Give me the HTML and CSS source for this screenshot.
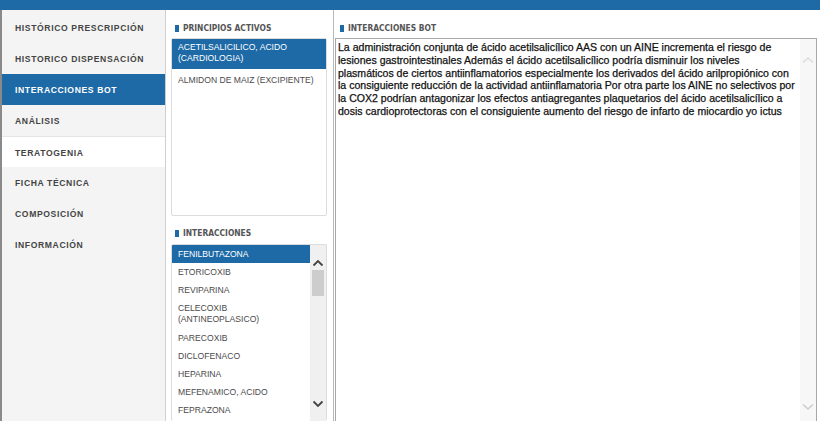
FILE: index.html
```html
<!DOCTYPE html>
<html lang="es">
<head>
<meta charset="utf-8">
<link rel="stylesheet" href="styles.css">
</head>
<body>
<div class="topbar"></div>
<div class="main">
  <nav class="sidebar">
    <div class="nav-item">HISTÓRICO PRESCRIPCIÓN</div>
    <div class="nav-item">HISTORICO DISPENSACIÓN</div>
    <div class="nav-item active">INTERACCIONES BOT</div>
    <div class="nav-item">ANÁLISIS</div>
    <div class="nav-item hover">TERATOGENIA</div>
    <div class="nav-item">FICHA TÉCNICA</div>
    <div class="nav-item">COMPOSICIÓN</div>
    <div class="nav-item">INFORMACIÓN</div>
  </nav>
  <section class="middle">
    <h2 class="heading">PRINCIPIOS ACTIVOS</h2>
    <div class="listbox principles">
      <div class="row sel">ACETILSALICILICO, ACIDO (CARDIOLOGIA)</div>
      <div class="row">ALMIDON DE MAIZ (EXCIPIENTE)</div>
    </div>
    <h2 class="heading second">INTERACCIONES</h2>
    <div class="listbox interactions">
      <div class="items">
        <div class="irow sel">FENILBUTAZONA</div>
        <div class="irow">ETORICOXIB</div>
        <div class="irow">REVIPARINA</div>
        <div class="irow">CELECOXIB (ANTINEOPLASICO)</div>
        <div class="irow">PARECOXIB</div>
        <div class="irow">DICLOFENACO</div>
        <div class="irow">HEPARINA</div>
        <div class="irow">MEFENAMICO, ACIDO</div>
        <div class="irow">FEPRAZONA</div>
      </div>
      <div class="vscroll">
        <svg class="arrow" width="12" height="8" viewBox="0 0 12 8"><path d="M1.5 6.5 L6 2 L10.5 6.5" fill="none" stroke="#444" stroke-width="1.8"/></svg>
        <div class="thumb"></div>
        <div class="track"></div>
        <svg class="arrow" width="12" height="8" viewBox="0 0 12 8"><path d="M1.5 1.5 L6 6 L10.5 1.5" fill="none" stroke="#444" stroke-width="1.8"/></svg>
      </div>
    </div>
  </section>
  <section class="right">
    <h2 class="heading">INTERACCIONES BOT</h2>
    <div class="textbox">
      <p class="text">La administración conjunta de ácido acetilsalicílico AAS con un AINE incrementa el riesgo de lesiones gastrointestinales Además el ácido acetilsalicílico podría disminuir los niveles plasmáticos de ciertos antiinflamatorios especialmente los derivados del ácido arilpropiónico con la consiguiente reducción de la actividad antiinflamatoria Por otra parte los AINE no selectivos por la COX2 podrían antagonizar los efectos antiagregantes plaquetarios del ácido acetilsalicílico a dosis cardioprotectoras con el consiguiente aumento del riesgo de infarto de miocardio yo ictus</p>
      <div class="tscroll">
        <svg width="14" height="8" viewBox="0 0 14 8"><path d="M2 6.5 L7 2 L12 6.5" fill="none" stroke="#ddd" stroke-width="1.6"/></svg>
        <svg width="14" height="8" viewBox="0 0 14 8"><path d="M2 1.5 L7 6 L12 1.5" fill="none" stroke="#ccc" stroke-width="1.6"/></svg>
      </div>
    </div>
  </section>
</div>
</body>
</html>
```
FILE: styles.css
```css
* { box-sizing: border-box; margin: 0; padding: 0; }
html, body { width: 820px; height: 421px; overflow: hidden; background: #fff; }
body { font-family: "Liberation Sans", Arial, sans-serif; color: #333; }

.topbar { height: 10px; background: #1d6aa6; }

.main { display: flex; height: 411px; border-left: 2px solid #8a8a8a; }

.sidebar {
  width: 164px;
  flex: none;
  background: #f4f4f4;
  border-right: 1px solid #cfcfcf;
  padding-top: 2px;
}
.nav-item {
  height: 31px;
  display: flex;
  align-items: center;
  padding-left: 13px;
  padding-top: 1px;
  font-size: 8.6px;
  font-weight: bold;
  letter-spacing: 0.62px;
  color: #444;
}
.nav-item.active { background: #1d6aa6; color: #fff; }
.nav-item.hover { background: #fff; border-top: 1px solid #e6e6e6; }

.middle {
  width: 168px;
  flex: none;
  padding: 0 6px 0 5px;
  border-right: 1px solid #b8b8b8;
  display: flex;
  flex-direction: column;
}
.heading {
  display: flex;
  align-items: flex-end;
  height: 28px;
  padding-left: 4px;
  padding-bottom: 5px;
  font-family: "Liberation Sans Narrow", "DejaVu Sans Condensed", sans-serif;
  font-size: 8.4px;
  font-weight: bold;
  color: #555;
  line-height: 9px;
}
.heading::before {
  content: "";
  width: 4px;
  height: 7px;
  background: #1d6aa6;
  margin-right: 4px;
  margin-bottom: 1px;
}
.heading.second { height: 27px; margin-top: 1px; padding-bottom: 6px; }

.listbox {
  border: 1px solid #dcdcdc;
  border-radius: 2px;
  background: #fff;
}
.principles { height: 178px; }
.row {
  padding: 3px 6px 4px 6px;
  font-size: 8.6px;
  line-height: 11px;
  color: #4a4a4a;
}
.row.sel { background: #1d6aa6; color: #fff; padding: 3px 6px 5px 6px; }
.principles .row + .row { padding-top: 6px; }

.interactions { flex: 1; display: flex; overflow: hidden; border-bottom: none; }
.items { flex: 1; }
.irow {
  padding: 3.8px 6px 3.4px 6px;
  font-size: 8.6px;
  line-height: 11px;
  color: #4a4a4a;
}
.irow.sel { background: #1d6aa6; color: #fff; }
.vscroll {
  width: 16px;
  flex: none;
  background: #f0f0f0;
  display: flex;
  flex-direction: column;
  align-items: center;
  padding-top: 14px;
}
.arrow { flex: none; }
.thumb { width: 12px; height: 26px; background: #cdcdcd; margin-top: 3px; }
.track { flex: 1; }
.vscroll .arrow:last-child { margin-bottom: 13px; }

.right {
  flex: 1;
  display: flex;
  flex-direction: column;
  padding-left: 1px;
  padding-right: 3px;
}
.right .heading { padding-left: 5px; }
.textbox {
  flex: 1;
  border: 1px solid #a8a8a8;
  border-bottom: none;
  display: flex;
}
.text {
  flex: 1;
  padding: 2px 3px 0 2px;
  font-size: 10.55px;
  line-height: 12.8px;
  color: #111;
  -webkit-text-stroke: 0.25px #111;
}
.tscroll {
  width: 16px;
  flex: none;
  background: #f7f7f7;
  display: flex;
  flex-direction: column;
  justify-content: space-between;
  align-items: center;
  padding: 17px 0 10px;
}
```
